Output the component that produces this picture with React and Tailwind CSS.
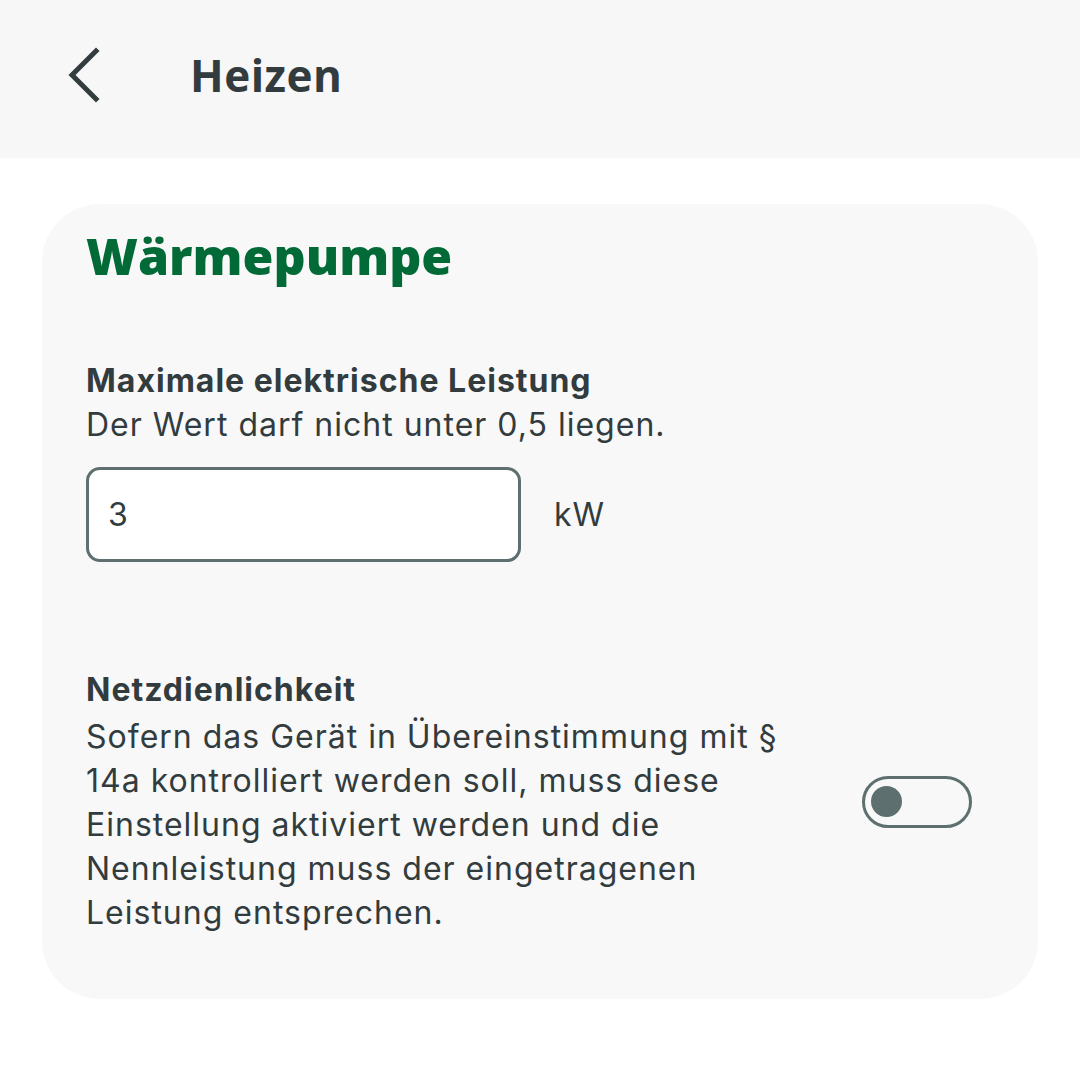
import { useState } from "react";

function BackIcon() {
  return (
    <svg width="36" height="56" viewBox="0 0 36 56" fill="none">
      <path d="M30 4 L6 28 L30 52" stroke="#333d3f" strokeWidth="5" strokeLinecap="square" />
    </svg>
  );
}

function Toggle({ on, onChange }) {
  return (
    <button
      onClick={() => onChange(!on)}
      className="flex items-center w-[110px] h-[52px] rounded-full border-[3px] border-[#5e6f6f] bg-transparent px-[6px]">
      <span className={`block w-[31px] h-[31px] rounded-full bg-[#5e6f6f] ${on ? "ml-auto" : ""}`} />
    </button>
  );
}

export default function App() {
  const [power, setPower] = useState("3");
  const [gridFriendly, setGridFriendly] = useState(false);
  const body = { fontFamily: "Inter, 'Noto Sans', sans-serif" };
  const heading = { fontFamily: "'Open Sans', 'Noto Sans', sans-serif" };

  return (
    <div className="w-[1080px] h-[1072px] bg-white text-[#323c3e]" style={body}>
      <header className="flex items-center h-[158px] pb-[8px] bg-[#f7f7f7]">
        <div className="ml-[66px] w-[124px]">
          <BackIcon />
        </div>
        <h1 className="text-[44px] font-bold leading-none tracking-[0.5px]" style={heading}>
          Heizen
        </h1>
      </header>

      <main className="px-[42px] pt-[46px]">
        <section className="h-[795px] rounded-[58px] bg-[#f8f8f8] px-[44px] pt-[20px]">
          <h2 className="text-[50px] font-extrabold leading-[64px] text-[#016a37]" style={heading}>
            Wärmepumpe
          </h2>

          <div className="mt-[71px] text-[32px] leading-[44px] tracking-[1px]">
            <p className="font-bold">Maximale elektrische Leistung</p>
            <p>Der Wert darf nicht unter 0,5 liegen.</p>
          </div>

          <div className="flex items-center mt-[20px]">
            <input
              value={power}
              onChange={(e) => setPower(e.target.value)}
              className="w-[435px] h-[95px] rounded-[14px] border-[3px] border-[#5e6f6f] bg-white px-[19px] text-[32px] outline-none"
            />
            <span className="ml-[33px] text-[32px] tracking-[1px]">kW</span>
          </div>

          <div className="flex items-center mt-[106px] text-[32px] leading-[44px] tracking-[1px]">
            <div className="w-[712px]">
              <p className="font-bold mb-[3px]">Netzdienlichkeit</p>
              <p>
                Sofern das Gerät in Übereinstimmung mit § 14a kontrolliert werden soll, muss diese Einstellung
                aktiviert werden und die Nennleistung muss der eingetragenen Leistung entsprechen.
              </p>
            </div>
            <div className="ml-auto mr-[22px]">
              <Toggle on={gridFriendly} onChange={setGridFriendly} />
            </div>
          </div>
        </section>
      </main>
    </div>
  );
}
